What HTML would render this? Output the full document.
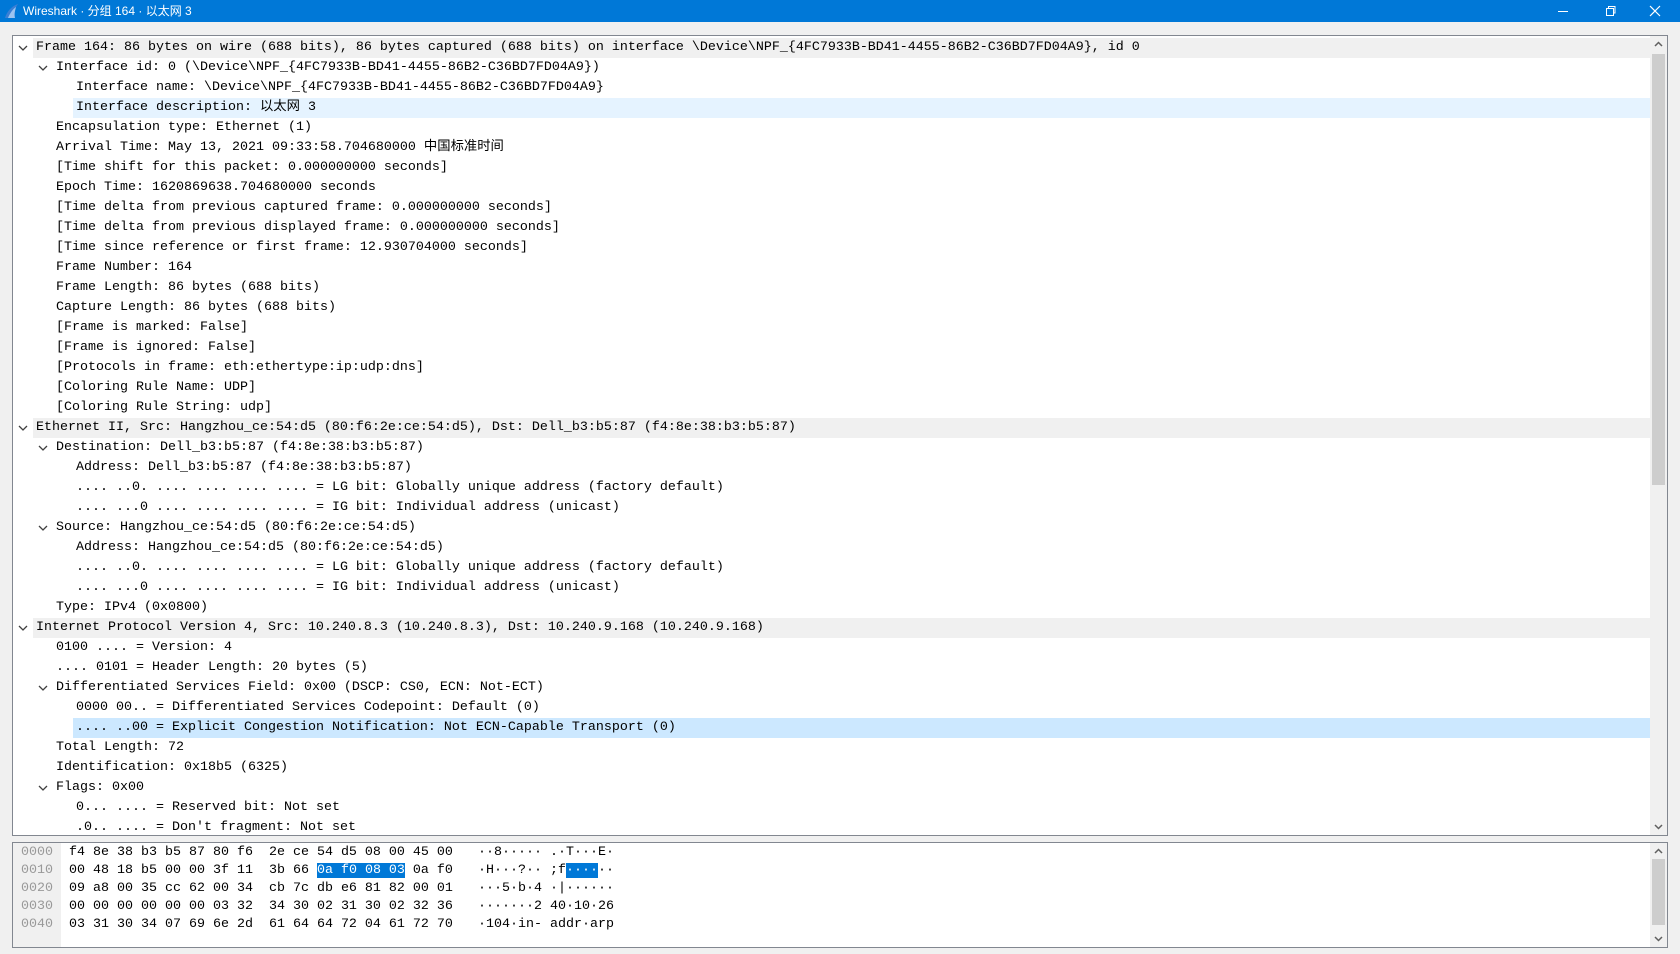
<!DOCTYPE html>
<html><head><meta charset="utf-8"><style>
*{margin:0;padding:0;box-sizing:border-box}
body{width:1680px;height:954px;background:#f0f0f0;position:relative;overflow:hidden;font-family:"Liberation Mono","Noto Sans CJK SC",monospace;font-size:13.33px;color:#000}
#title{position:absolute;left:0;top:0;width:1680px;height:22px;background:#0078d7;color:#fff;font-family:"Liberation Sans","Noto Sans CJK SC",sans-serif;font-size:12px;line-height:22px}
#title .t{position:absolute;left:23px;top:0}
#tree{position:absolute;left:12px;top:35px;width:1656px;height:801px;border:1px solid #828790;background:#fff;overflow:hidden}
#rows{position:absolute;left:0;top:2px;right:0;bottom:0}
.r{position:absolute;left:0;height:20px;line-height:20px;white-space:pre;right:17px}
.r span.bg{position:absolute;top:0;bottom:0;right:0}
.r span.tx{position:absolute;top:0}
.r svg{position:absolute;top:6px}
.sb{position:absolute;right:0;width:17px;background:#f0f0f0}
.th{position:absolute;left:2px;width:13px;background:#cdcdcd}
#bytes{position:absolute;left:12px;top:842px;width:1656px;height:106px;border:1px solid #828790;background:#fff;overflow:hidden}
.b{position:absolute;height:18px;line-height:18px;white-space:pre}
.off{color:#999;left:8px}
.sel{background:#0078d7;color:#fff}
</style></head><body>
<div id="title">
<svg style="position:absolute;left:4px;top:3px" width="16" height="16" viewBox="0 0 16 16"><path d="M1 15 C3 8 8 3 14 1 C11 5 10 10 11 15 Z" fill="#3a7fd5"/><path d="M4 15 C6 10 9 6 12 4 C11 8 10 11 11 15Z" fill="#9cc3f0"/></svg>
<span class="t">Wireshark · 分组 164 · 以太网 3</span>
<svg style="position:absolute;left:1557px;top:6px" width="12" height="10"><path d="M1 5.5H11" stroke="#fff"/></svg>
<svg style="position:absolute;left:1604px;top:5px" width="12" height="12"><path d="M2.5 3.5h7v7h-7z M4.5 3.5v-2h6.5v6.5h-1.5" fill="none" stroke="#fff"/></svg>
<svg style="position:absolute;left:1649px;top:5px" width="12" height="12"><path d="M1 1L11 11M11 1L1 11" stroke="#fff" stroke-width="1.2"/></svg>
</div>
<div id="tree">
<div class="sb" style="top:0;bottom:0"><div class="th" style="top:18px;height:431px"></div>
<svg style="position:absolute;left:4px;top:5px" width="9" height="6"><path d="M1 5L4.5 1.5L8 5" fill="none" stroke="#606060" stroke-width="1.5"/></svg>
<svg style="position:absolute;left:4px;bottom:5px" width="9" height="6"><path d="M1 1L4.5 4.5L8 1" fill="none" stroke="#606060" stroke-width="1.5"/></svg></div>
<div id="rows"></div>
</div>
<div id="bytes">
<div style="position:absolute;left:0;top:0;width:48px;height:106px;background:#f0f0f0"></div>
<div class="sb" style="top:0;bottom:0"><div class="th" style="top:16px;height:66px"></div>
<svg style="position:absolute;left:4px;top:5px" width="9" height="6"><path d="M1 5L4.5 1.5L8 5" fill="none" stroke="#606060" stroke-width="1.5"/></svg>
<svg style="position:absolute;left:4px;bottom:5px" width="9" height="6"><path d="M1 1L4.5 4.5L8 1" fill="none" stroke="#606060" stroke-width="1.5"/></svg></div>
<div class="b off" style="top:1px">0000</div>
<div class="b" style="top:1px;left:56px">f4 8e 38 b3 b5 87 80 f6  2e ce 54 d5 08 00 45 00</div>
<div class="b" style="top:1px;left:465px">··8····· .·T···E·</div>
<div class="b off" style="top:19px">0010</div>
<div class="b" style="top:19px;left:56px">00 48 18 b5 00 00 3f 11  3b 66 <span class="sel">0a f0 08 03</span> 0a f0</div>
<div class="b" style="top:19px;left:465px">·H···?·· ;f<span class="sel">····</span>··</div>
<div class="b off" style="top:37px">0020</div>
<div class="b" style="top:37px;left:56px">09 a8 00 35 cc 62 00 34  cb 7c db e6 81 82 00 01</div>
<div class="b" style="top:37px;left:465px">···5·b·4 ·|······</div>
<div class="b off" style="top:55px">0030</div>
<div class="b" style="top:55px;left:56px">00 00 00 00 00 00 03 32  34 30 02 31 30 02 32 36</div>
<div class="b" style="top:55px;left:465px">·······2 40·10·26</div>
<div class="b off" style="top:73px">0040</div>
<div class="b" style="top:73px;left:56px">03 31 30 34 07 69 6e 2d  61 64 64 72 04 61 72 70</div>
<div class="b" style="top:73px;left:465px">·104·in- addr·arp</div>
</div>
<script>
var R=[
[0,1,'Frame 164: 86 bytes on wire (688 bits), 86 bytes captured (688 bits) on interface \\Device\\NPF_{4FC7933B-BD41-4455-86B2-C36BD7FD04A9}, id 0','g'],
[1,1,'Interface id: 0 (\\Device\\NPF_{4FC7933B-BD41-4455-86B2-C36BD7FD04A9})'],
[2,0,'Interface name: \\Device\\NPF_{4FC7933B-BD41-4455-86B2-C36BD7FD04A9}'],
[2,0,'Interface description: 以太网 3','h'],
[1,0,'Encapsulation type: Ethernet (1)'],
[1,0,'Arrival Time: May 13, 2021 09:33:58.704680000 中国标准时间'],
[1,0,'[Time shift for this packet: 0.000000000 seconds]'],
[1,0,'Epoch Time: 1620869638.704680000 seconds'],
[1,0,'[Time delta from previous captured frame: 0.000000000 seconds]'],
[1,0,'[Time delta from previous displayed frame: 0.000000000 seconds]'],
[1,0,'[Time since reference or first frame: 12.930704000 seconds]'],
[1,0,'Frame Number: 164'],
[1,0,'Frame Length: 86 bytes (688 bits)'],
[1,0,'Capture Length: 86 bytes (688 bits)'],
[1,0,'[Frame is marked: False]'],
[1,0,'[Frame is ignored: False]'],
[1,0,'[Protocols in frame: eth:ethertype:ip:udp:dns]'],
[1,0,'[Coloring Rule Name: UDP]'],
[1,0,'[Coloring Rule String: udp]'],
[0,1,'Ethernet II, Src: Hangzhou_ce:54:d5 (80:f6:2e:ce:54:d5), Dst: Dell_b3:b5:87 (f4:8e:38:b3:b5:87)','g'],
[1,1,'Destination: Dell_b3:b5:87 (f4:8e:38:b3:b5:87)'],
[2,0,'Address: Dell_b3:b5:87 (f4:8e:38:b3:b5:87)'],
[2,0,'.... ..0. .... .... .... .... = LG bit: Globally unique address (factory default)'],
[2,0,'.... ...0 .... .... .... .... = IG bit: Individual address (unicast)'],
[1,1,'Source: Hangzhou_ce:54:d5 (80:f6:2e:ce:54:d5)'],
[2,0,'Address: Hangzhou_ce:54:d5 (80:f6:2e:ce:54:d5)'],
[2,0,'.... ..0. .... .... .... .... = LG bit: Globally unique address (factory default)'],
[2,0,'.... ...0 .... .... .... .... = IG bit: Individual address (unicast)'],
[1,0,'Type: IPv4 (0x0800)'],
[0,1,'Internet Protocol Version 4, Src: 10.240.8.3 (10.240.8.3), Dst: 10.240.9.168 (10.240.9.168)','g'],
[1,0,'0100 .... = Version: 4'],
[1,0,'.... 0101 = Header Length: 20 bytes (5)'],
[1,1,'Differentiated Services Field: 0x00 (DSCP: CS0, ECN: Not-ECT)'],
[2,0,'0000 00.. = Differentiated Services Codepoint: Default (0)'],
[2,0,'.... ..00 = Explicit Congestion Notification: Not ECN-Capable Transport (0)','s'],
[1,0,'Total Length: 72'],
[1,0,'Identification: 0x18b5 (6325)'],
[1,1,'Flags: 0x00'],
[2,0,'0... .... = Reserved bit: Not set'],
[2,0,'.0.. .... = Don\'t fragment: Not set']
];
var h='';
R.forEach(function(r,i){
 var x=23+r[0]*20, bgc=r[3]=='g'?'#f0f0f0':r[3]=='s'?'#cce8ff':r[3]=='h'?'#e5f3ff':'';
 h+='<div class="r" style="top:'+(i*20)+'px">';
 if(bgc)h+='<span class="bg" style="left:'+(x-3)+'px;background:'+bgc+'"></span>';
 if(r[1])h+='<svg style="left:'+(x-18)+'px" width="10" height="8"><path d="M1 2L5 6L9 2" fill="none" stroke="#404040" stroke-width="1.3"/></svg>';
 h+='<span class="tx" style="left:'+x+'px"></span></div>';
});
document.getElementById('rows').innerHTML=h;
var t=document.querySelectorAll('#rows .tx');
R.forEach(function(r,i){t[i].textContent=r[2];});
</script>
</body></html>
